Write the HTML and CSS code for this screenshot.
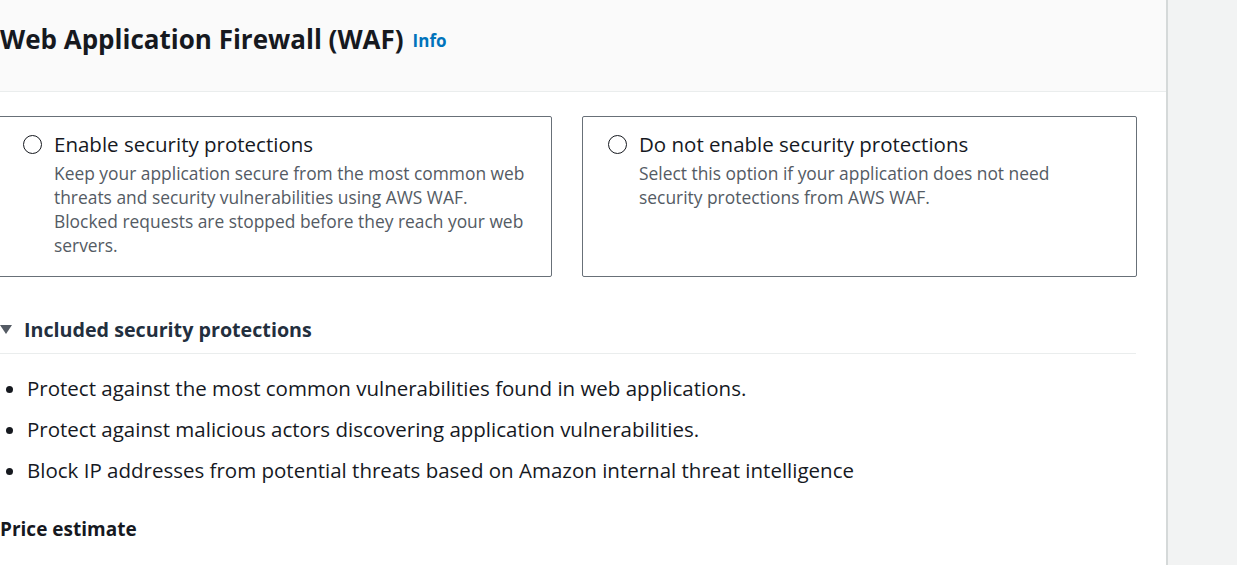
FILE: index.html
```html
<!DOCTYPE html>
<html>
<head>
<meta charset="utf-8">
<link rel="stylesheet" href="styles.css">
</head>
<body>
<div class="layout">
  <main class="main">
    <header class="header">
      <h1 class="title">Web Application Firewall (WAF)</h1>
      <a class="info">Info</a>
    </header>
    <section class="body">
      <div class="cards">
        <label class="card">
          <span class="radio"></span>
          <span class="card-text">
            <span class="card-title">Enable security protections</span>
            <span class="card-desc">Keep your application secure from the most common web threats and security vulnerabilities using AWS WAF. Blocked requests are stopped before they reach your web servers.</span>
          </span>
        </label>
        <label class="card">
          <span class="radio"></span>
          <span class="card-text">
            <span class="card-title">Do not enable security protections</span>
            <span class="card-desc">Select this option if your application does not need security protections from AWS WAF.</span>
          </span>
        </label>
      </div>
      <div class="expand">
        <div class="expand-head">
          <span class="caret"></span>
          <span class="expand-title">Included security protections</span>
        </div>
        <ul class="list">
          <li>Protect against the most common vulnerabilities found in web applications.</li>
          <li>Protect against malicious actors discovering application vulnerabilities.</li>
          <li>Block IP addresses from potential threats based on Amazon internal threat intelligence</li>
        </ul>
      </div>
      <h2 class="price">Price estimate</h2>
    </section>
  </main>
  <aside class="side"></aside>
</div>
</body>
</html>
```

FILE: styles.css
```css
html, body {
  margin: 0;
  padding: 0;
  height: 100%;
  overflow: hidden;
  background: #ffffff;
  font-family: "Open Sans", "Liberation Sans", sans-serif;
  color: #16191f;
}
.layout {
  display: flex;
  height: 565px;
}
.main {
  width: 1166px;
  flex: none;
  border-right: 2px solid #d5d9d9;
  background: #ffffff;
}
.side {
  flex: 1;
  background: #f2f3f3;
}
.header {
  background: #fafafa;
  border-bottom: 1px solid #eaeded;
  display: flex;
  align-items: center;
  box-sizing: border-box;
  height: 92px;
  padding-bottom: 14px;
}
.title {
  margin: 0;
  font-size: 26px;
  font-weight: 700;
  color: #16191f;
}
.info {
  margin-left: 9px;
  margin-top: 4px;
  font-size: 17px;
  font-weight: 700;
  color: #0073bb;
}
.body {
  padding-top: 24px;
}
.cards {
  display: flex;
  gap: 30px;
  margin-left: -3px;
  width: 1140px;
}
.card {
  flex: 1;
  height: 161px;
  box-sizing: border-box;
  border: 1px solid #687078;
  border-radius: 2px;
  display: flex;
  align-items: flex-start;
  padding: 14px 10px 0 25px;
  gap: 12px;
}
.radio {
  width: 17px;
  height: 17px;
  border: 1.5px solid #16191f;
  border-radius: 50%;
  flex: none;
  margin-top: 4px;
}
.card-text {
  display: flex;
  flex-direction: column;
  width: 476px;
}
.card-title {
  font-size: 20.5px;
  line-height: 27px;
  color: #16191f;
}
.card-desc {
  font-size: 17.4px;
  line-height: 24px;
  color: #545b64;
  margin-top: 3px;
}
.expand {
  margin-top: 40px;
  width: 1136px;
}
.expand-head {
  display: flex;
  align-items: center;
  gap: 12px;
  height: 36px;
  border-bottom: 1px solid #eaeded;
}
.caret {
  width: 0;
  height: 0;
  border-left: 6.5px solid transparent;
  border-right: 6.5px solid transparent;
  border-top: 9px solid #545b64;
  margin-top: -11px;
}
.expand-title {
  font-size: 19.7px;
  font-weight: 700;
  color: #232f3e;
  margin-top: -12px;
}
.list {
  margin: 14px 0 0 0;
  padding-left: 27px;
}
.list li {
  font-size: 20.5px;
  line-height: 41px;
  color: #16191f;
}
.price {
  margin: 25px 0 0 0;
  font-size: 19px;
  font-weight: 700;
  color: #16191f;
}
```
